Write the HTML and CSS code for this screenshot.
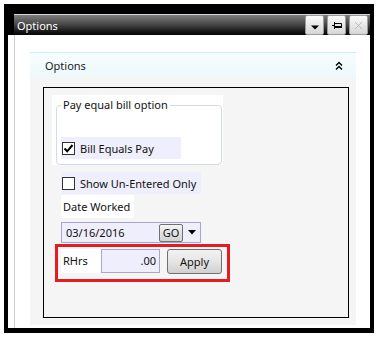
FILE: index.html
```html
<!DOCTYPE html>
<html lang="en">
<head>
    <meta charset="UTF-8">
    <meta name="viewport" content="width=device-width, initial-scale=1.0">
    <title>Options</title>
    <link rel="stylesheet" href="styles.css">
</head>
<body>
    <!-- Outer black frame -->
    <div class="frame">
        <div class="window">

            <!-- Title Bar -->
            <div class="titlebar-wrap">
                <div class="titlebar">
                    <span class="title">Options</span>
                    <div class="tb-buttons">
                        <span class="tb-btn">
                            <svg width="8" height="5" viewBox="0 0 8 5"><path d="M0 0.5 L8 0.5 L4 4.5 Z" fill="#000"/></svg>
                        </span>
                        <span class="tb-btn">
                            <svg width="10" height="7" viewBox="0 0 10 7"><path d="M0 3.5 H2.5 M2.5 0 V7 M2.5 1.5 H9.5 V5 H2.5" stroke="#000" stroke-width="1" fill="none"/><rect x="2.5" y="4" width="7.5" height="2" fill="#000"/></svg>
                        </span>
                        <span class="tb-btn disabled">
                            <svg width="9" height="9" viewBox="0 0 9 9"><path d="M1 1 L8 8 M8 1 L1 8" stroke="#bcbcbc" stroke-width="1"/></svg>
                        </span>
                    </div>
                </div>
            </div>

            <!-- Window Body -->
            <div class="window-body">
                <div class="panel">
                    <div class="panel-header">
                        <span>Options</span>
                        <svg width="8" height="9" viewBox="0 0 8 9"><path d="M1 4.5 L4 1.5 L7 4.5 M1 8.5 L4 5.5 L7 8.5" stroke="#000" stroke-width="1.4" fill="none"/></svg>
                    </div>
                    <div class="panel-body">
                        <div class="inner-box">

                            <div class="group-area">
                                <fieldset class="group">
                                    <legend>Pay equal bill option</legend>
                                    <label class="check-row">
                                        <span class="checkbox checked">
                                            <svg width="11" height="11" viewBox="0 0 11 11"><path d="M1.5 5.5 L4.2 8.3 L9.5 2" stroke="#000" stroke-width="2" fill="none"/></svg>
                                        </span>
                                        Bill Equals Pay
                                    </label>
                                </fieldset>
                            </div>

                            <label class="check-row second">
                                <span class="checkbox"></span>
                                Show Un-Entered Only
                            </label>

                            <div class="field-label">Date Worked</div>

                            <div class="date-input">
                                <span class="date-text">03/16/2016</span>
                                <span class="go-btn">GO</span>
                                <svg class="drop" width="8" height="5" viewBox="0 0 8 5"><path d="M0 0 H8 L4 4.5 Z" fill="#000"/></svg>
                            </div>

                            <div class="highlight">
                                <span class="rhrs-label">RHrs</span>
                                <span class="num-input">.00</span>
                                <span class="apply-btn">Apply</span>
                            </div>

                        </div>
                    </div>
                </div>
            </div>

        </div>
    </div>
</body>
</html>
```

FILE: styles.css
```css
/* General Styles */
body {
    margin: 0;
    background: white;
    font-family: "Noto Sans", "Open Sans", sans-serif;
    font-size: 11px;
    color: #111;
    white-space: nowrap;
}

/* Frame */
.frame {
    margin: 4px 0 0 4px;
    width: 370px;
    height: 329px;
    box-sizing: border-box;
    background: black;
    padding: 10px 4px 5px 4px;
}

.window {
    height: 100%;
    display: flex;
    flex-direction: column;
    background: white;
}

/* Title Bar */
.titlebar-wrap {
    background: black;
    padding-left: 6px;
}

.titlebar {
    height: 20px;
    border-top: 1px solid #d2d6de;
    background: linear-gradient(#7d7d7d, #4a4a4a 45%, #141414 85%, #050505);
    display: flex;
    align-items: center;
    justify-content: space-between;
    padding: 0 2px 0 3px;
}

.title {
    color: white;
}

.tb-buttons {
    display: flex;
    gap: 3px;
}

.tb-btn {
    width: 19px;
    height: 20px;
    box-sizing: border-box;
    border: 1px solid #9c9c9c;
    border-radius: 2px;
    background: linear-gradient(#fbfbfb, #e8e8e8 50%, #d6d6d6);
    display: flex;
    align-items: center;
    justify-content: center;
}

.tb-btn:first-child svg {
    margin-top: 5px;
}

.tb-btn:nth-child(2) svg {
    margin-top: 1px;
}

/* Window Body */
.window-body {
    flex: 1;
    display: flex;
    margin-left: 6px;
    border-left: 1px solid #cfcfc6;
    padding: 17px 14px 3px 15px;
}

.panel {
    flex: 1;
    display: flex;
    flex-direction: column;
}

.panel-header {
    height: 24px;
    border-top: 1px solid #c6edf8;
    background: linear-gradient(#f7fdfe, #ecf9fc);
    display: flex;
    align-items: center;
    justify-content: space-between;
    padding: 0 13px 0 15px;
    color: #1b1b1b;
}

.panel-body {
    flex: 1;
    display: flex;
    background: #f5f5f5;
    padding: 10px 7px 7px 13px;
}

.inner-box {
    flex: 1;
    border: 1px solid black;
    padding: 7px 0 0 8px;
    display: flex;
    flex-direction: column;
    align-items: flex-start;
}

/* Group Box */
.group-area {
    width: 171px;
    height: 70px;
    box-sizing: border-box;
    background: white;
    padding: 2px 1px 0 4px;
}

.group {
    margin: 0;
    height: 68px;
    box-sizing: border-box;
    border: 1px solid #d3dbe3;
    border-radius: 4px;
    padding: 0 4px 3px 4px;
}

.group legend {
    padding: 0 2px;
    line-height: 16px;
}

/* Checkbox Rows */
.check-row {
    display: flex;
    align-items: center;
    gap: 5px;
    width: 120px;
    height: 22px;
    box-sizing: border-box;
    padding-left: 1px;
    background: #eeeefc;
}

.group .check-row {
    margin-top: 24px;
}

.check-row.second {
    width: 140px;
    margin: 7px 0 0 9px;
}

.checkbox {
    width: 13px;
    height: 13px;
    box-sizing: border-box;
    border: 1px solid #333;
    background: white;
    display: flex;
    align-items: center;
    justify-content: center;
}

/* Date */
.field-label {
    margin: 1px 0 0 9px;
    width: 73px;
    height: 23px;
    box-sizing: border-box;
    padding-left: 2px;
    background: white;
    line-height: 23px;
}

.date-input {
    margin: 4px 0 0 9px;
    width: 140px;
    height: 21px;
    box-sizing: border-box;
    border: 1px solid #a8a8c4;
    background: #eeeefc;
    display: flex;
    align-items: center;
    padding-left: 4px;
}

.date-text {
    width: 93px;
}

.go-btn {
    width: 24px;
    height: 18px;
    box-sizing: border-box;
    border: 1px solid #707070;
    border-radius: 2px;
    background: linear-gradient(#f4f4f4, #e2e2e2 50%, #d2d2d2);
    text-align: center;
    line-height: 16px;
}

.drop {
    margin-left: 5px;
}

/* Highlighted Row */
.highlight {
    margin: 1px 0 0 3px;
    width: 175px;
    height: 38px;
    box-sizing: border-box;
    border: 3px solid #e31b23;
    padding: 2px 5px 4px 3px;
    display: flex;
    align-items: flex-start;
}

.rhrs-label {
    width: 40px;
    height: 24px;
    box-sizing: border-box;
    padding-left: 2px;
    background: white;
    line-height: 24px;
}

.num-input {
    width: 59px;
    height: 24px;
    box-sizing: border-box;
    border: 1px solid #a8a8c4;
    background: #eeeefc;
    text-align: right;
    padding-right: 3px;
    line-height: 22px;
}

.apply-btn {
    margin-left: 7px;
    width: 55px;
    height: 25px;
    box-sizing: border-box;
    border: 1px solid #707070;
    border-radius: 3px;
    background: linear-gradient(#f3f3f3, #e5e5e5 50%, #d0d0d0);
    text-align: center;
    line-height: 23px;
}
```
